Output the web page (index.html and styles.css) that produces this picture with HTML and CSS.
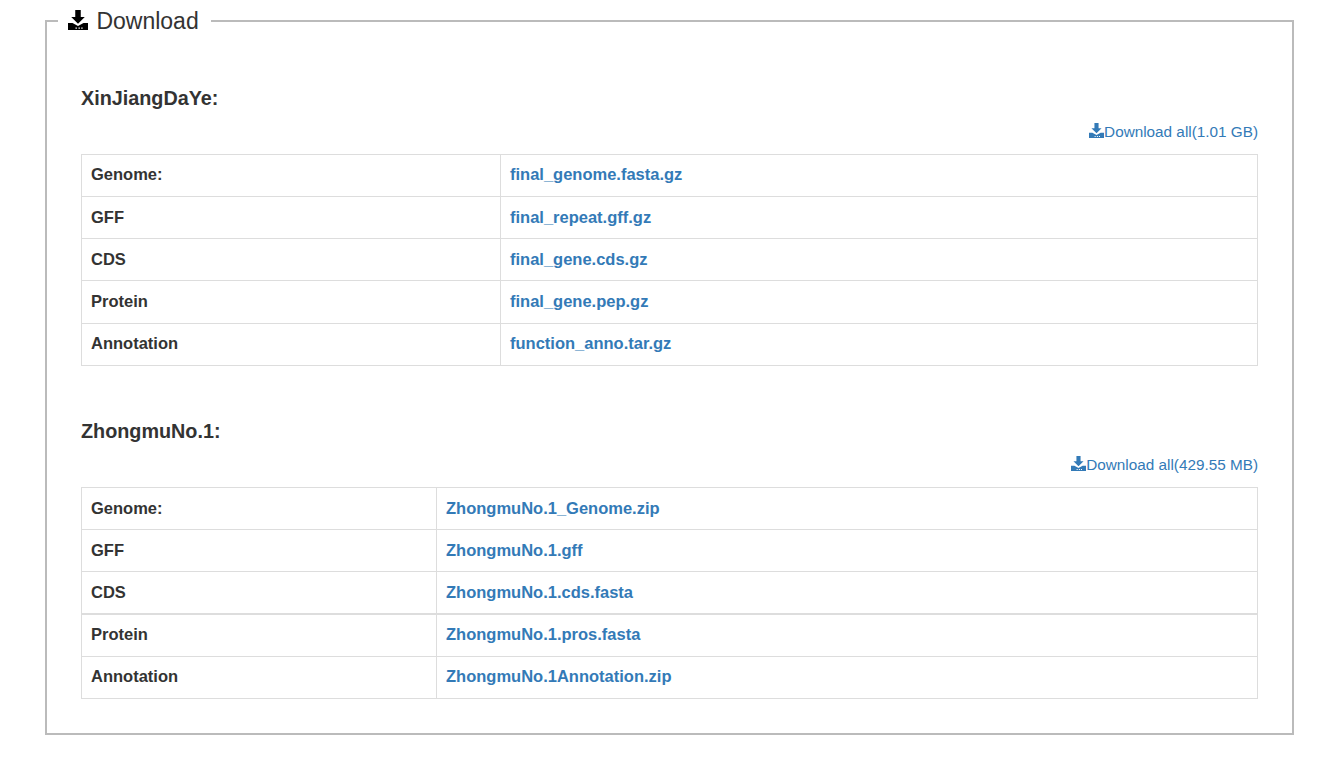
FILE: index.html
```html
<!DOCTYPE html>
<html lang="en">
<head>
<meta charset="utf-8">
<title>Download</title>
<link rel="stylesheet" href="styles.css">
</head>
<body>
<svg class="defs" width="0" height="0" aria-hidden="true">
  <symbol id="dl" viewBox="0 0 16 16">
    <path d="M5.8 0h4.4v5.6h3.2L8 11 2.6 5.6h3.2z"/>
    <path fill-rule="evenodd" d="M0 10.4h3.6L8 12.8l4.4-2.4H16V16H0zM6 13.9h1.1V15H6zM8.4 13.9h1.1V15H8.4zM10.6 13.9h1.1V15h-1.1z"/>
  </symbol>
</svg>
<fieldset class="panel">
  <legend class="panel-title"><svg class="icon-title"><use href="#dl"/></svg> Download</legend>

  <section class="group group-first">
    <h3 class="group-name">XinJiangDaYe:</h3>
    <p class="all"><a href="#"><svg class="icon-link"><use href="#dl"/></svg>Download all(1.01 GB)</a></p>
    <table class="files files-a">
      <tr><th>Genome:</th><td><a href="#">final_genome.fasta.gz</a></td></tr>
      <tr><th>GFF</th><td><a href="#">final_repeat.gff.gz</a></td></tr>
      <tr><th>CDS</th><td><a href="#">final_gene.cds.gz</a></td></tr>
      <tr><th>Protein</th><td><a href="#">final_gene.pep.gz</a></td></tr>
      <tr><th>Annotation</th><td><a href="#">function_anno.tar.gz</a></td></tr>
    </table>
  </section>

  <section class="group">
    <h3 class="group-name">ZhongmuNo.1:</h3>
    <p class="all"><a href="#"><svg class="icon-link"><use href="#dl"/></svg>Download all(429.55 MB)</a></p>
    <table class="files files-b">
      <tr><th>Genome:</th><td><a href="#">ZhongmuNo.1_Genome.zip</a></td></tr>
      <tr><th>GFF</th><td><a href="#">ZhongmuNo.1.gff</a></td></tr>
      <tr><th>CDS</th><td><a href="#">ZhongmuNo.1.cds.fasta</a></td></tr>
      <tr class="seam"><th>Protein</th><td><a href="#">ZhongmuNo.1.pros.fasta</a></td></tr>
      <tr><th>Annotation</th><td><a href="#">ZhongmuNo.1Annotation.zip</a></td></tr>
    </table>
  </section>
</fieldset>
</body>
</html>
```
FILE: styles.css
```css
* { box-sizing: border-box; }
html, body { margin: 0; background: #fff; }
body {
  padding: 6px 45px 0;
  font-family: "Liberation Sans", Arial, sans-serif;
  color: #333;
}
.defs { position: absolute; }
a { color: #337ab7; text-decoration: none; }
.panel {
  width: 1249px;
  height: 729px;
  margin: 0;
  padding: 0 34px;
  border: 2px solid #bbb;
}
.panel-title {
  margin-left: -23px;
  padding: 2px 12px 0 10px;
  font-size: 23px;
  line-height: 27px;
  white-space: nowrap;
}
.icon-title { width: 20px; height: 20px; fill: #000; vertical-align: -1px; margin-right: 2px; }
.icon-link { width: 15px; height: 15px; fill: #337ab7; vertical-align: -1px; }
.group-first { margin-top: 50px; }
.group + .group { margin-top: 52.4px; }
.group-name {
  margin: 0;
  font-size: 19.8px;
  line-height: 26px;
  font-weight: 700;
}
.all {
  margin: 11px 0 0;
  text-align: right;
  font-size: 15.3px;
  line-height: 20px;
}
.files {
  width: 1177px;
  margin-top: 11.8px;
  border-collapse: collapse;
  table-layout: fixed;
  font-size: 16.5px;
}
.files th, .files td {
  height: 42.2px;
  padding: 0 9px 2px;
  border: 1px solid #ddd;
  text-align: left;
  font-weight: 700;
  line-height: 22px;
}
.seam th, .seam td { box-shadow: inset 0 1px 0 #ddd; }
.files-a th { width: 419px; }
.files-b th { width: 355px; }
```
